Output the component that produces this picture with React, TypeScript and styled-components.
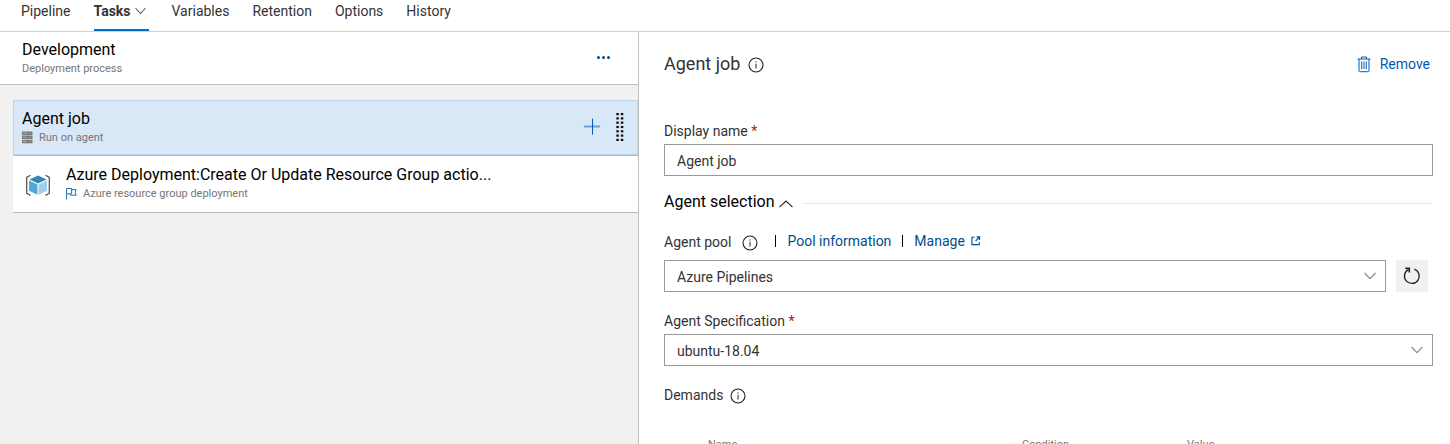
import React from "react";
import styled, { createGlobalStyle, css } from "styled-components";

const uiFont = `Roboto, "Liberation Sans", sans-serif`;

const color = {
  text: "#333333",
  strong: "#000000",
  muted: "#767676",
  link: "#004e8c",
  action: "#005bb5",
  accent: "#0070cc",
  border: "#c0c0c0",
  field: "#999999",
  surface: "#f1f1f1",
  selected: "#d9e8f7",
  selectedBorder: "#b8d5f3",
  required: "#b5121b",
};

const GlobalStyle = createGlobalStyle`
  *, *::before, *::after { box-sizing: border-box; }
  body { margin: 0; background: #fff; color: ${color.text}; font: 14px/20px ${uiFont}; }
  h1, h2, h3, p, ul { margin: 0; padding: 0; font-weight: 400; }
  button, input, select { font: inherit; color: inherit; }
  svg { display: block; flex: none; }
`;

const Page = styled.div`
  display: flex;
  flex-direction: column;
  height: 100vh;
  overflow: hidden;
`;

const TabBar = styled.nav`
  display: flex;
  flex: none;
  gap: 23px;
  padding: 0 21px;
  border-bottom: 1px solid #d0d0d0;
`;

const Tab = styled.button<{ $active?: boolean }>`
  display: flex;
  align-items: center;
  gap: 4px;
  height: 31px;
  padding: 0 0 8px;
  border: 0;
  border-bottom: 2px solid ${(p) => (p.$active ? color.accent : "transparent")};
  background: none;
  font-weight: ${(p) => (p.$active ? 700 : 400)};
  white-space: nowrap;

  svg {
    margin-right: 3px;
  }
`;

const Workspace = styled.main`
  display: grid;
  flex: 1;
  grid-template-columns: 44% 1fr;
  min-height: 0;
`;

const ProcessPane = styled.section`
  min-width: 0;
  background: ${color.surface};
`;

const ProcessHeader = styled.header`
  display: flex;
  align-items: flex-start;
  justify-content: space-between;
  height: 53px;
  padding: 8px 27px 0 22px;
  border-bottom: 1px solid ${color.border};
  background: #fff;
`;

const ItemTitle = styled.h2`
  overflow: hidden;
  color: ${color.strong};
  font-size: 16px;
  line-height: 20px;
  text-overflow: ellipsis;
  white-space: nowrap;
`;

const ItemNote = styled.p`
  display: flex;
  align-items: center;
  gap: 6px;
  color: ${color.muted};
  font-size: 11px;
  line-height: 18px;
`;

const IconButton = styled.button<{ $filled?: boolean }>`
  display: flex;
  align-items: center;
  justify-content: center;
  padding: 0;
  border: 0;
  background: none;
  cursor: pointer;
  ${(p) =>
    p.$filled &&
    css`
      flex: none;
      width: 32px;
      height: 32px;
      background: ${color.surface};
    `}
`;

const TaskList = styled.ul`
  margin: 15px 0 0 13px;
  list-style: none;
`;

const TaskItem = styled.li<{ $selected?: boolean }>`
  border-bottom: 1px solid #b8b8b8;
  background: #fff;
  ${(p) =>
    p.$selected &&
    css`
      background: ${color.selected};
      box-shadow: inset 0 0 0 1px ${color.selectedBorder};
    `}
`;

const TaskRow = styled.div<{ $nested?: boolean }>`
  display: flex;
  align-items: center;
  gap: 15px;
  height: ${(p) => (p.$nested ? 56 : 55)}px;
  padding: ${(p) => (p.$nested ? "0 16px 0 12px" : "0 14px 0 9px")};
`;

const TaskText = styled.div`
  flex: 1;
  min-width: 0;
`;

const DetailPane = styled.section`
  min-width: 0;
  padding: 0 17px 0 25px;
  border-left: 1px solid ${color.border};
  overflow: hidden;
`;

const DetailHeader = styled.header`
  display: flex;
  align-items: center;
  justify-content: space-between;
  padding: 20px 3px 45px 0;
`;

const DetailTitle = styled.div`
  display: flex;
  align-items: center;
  gap: 8px;

  h1 {
    font-size: 18px;
    line-height: 24px;
  }
`;

const RemoveButton = styled.button`
  display: flex;
  align-items: center;
  gap: 9px;
  padding: 0;
  border: 0;
  background: none;
  color: ${color.action};
  cursor: pointer;
`;

const Field = styled.div<{ $roomy?: boolean }>`
  display: flex;
  flex-direction: column;
  gap: ${(p) => (p.$roomy ? 8 : 3)}px;
`;

const LabelRow = styled.div<{ $tight?: boolean }>`
  display: flex;
  align-items: center;
  gap: ${(p) => (p.$tight ? 7 : 11)}px;
  height: 20px;
`;

const Required = styled.span`
  color: ${color.required};
`;

const controlStyle = css`
  width: 100%;
  height: 32px;
  padding: 2px 12px 0;
  border: 1px solid ${color.field};
  border-radius: 0;
  background: #fff;
`;

const TextInput = styled.input`
  ${controlStyle}
`;

const SelectBox = styled.div`
  position: relative;
  flex: 1;

  select {
    ${controlStyle}
    display: block;
    appearance: none;
  }

  svg {
    position: absolute;
    top: 12px;
    right: 10px;
    pointer-events: none;
  }
`;

const ControlRow = styled.div`
  display: flex;
  gap: 10px;
  padding-right: 5px;
`;

const SectionToggle = styled.button`
  display: flex;
  align-items: center;
  gap: 4px;
  width: 100%;
  margin: 15px 0 19px;
  padding: 0;
  border: 0;
  background: none;
  color: ${color.strong};
  font-size: 16px;
  line-height: 22px;
  text-align: left;

  svg {
    margin-top: 4px;
  }

  &::after {
    content: "";
    flex: 1;
    height: 1px;
    margin: 3px 0 0 6px;
    background: #e4e4e4;
  }
`;

const Links = styled.div`
  display: flex;
  align-items: center;
  gap: 11px;
  margin-left: 6px;
  padding-bottom: 2px;
`;

const Divider = styled.span`
  width: 1px;
  height: 12px;
  background: ${color.strong};
`;

const TextLink = styled.a`
  display: flex;
  align-items: center;
  gap: 6px;
  color: ${color.link};
  text-decoration: none;
`;

const Spacer = styled.div`
  height: 19px;
`;

const DemandTable = styled.table`
  width: 100%;
  margin-top: 30px;
  border-collapse: collapse;
  table-layout: fixed;
  color: ${color.muted};
  font-size: 11px;
  line-height: 20px;

  th {
    padding: 0;
    font-weight: 400;
    text-align: left;
  }
`;

const Chevron = ({ width = 12, up = false, stroke = "#666" }: { width?: number; up?: boolean; stroke?: string }) => (
  <svg width={width} height={8} viewBox={`0 0 ${width} 8`} fill="none" stroke={stroke} strokeWidth="1.1" aria-hidden>
    <path d={up ? `M.5 7.2 ${width / 2} 1 ${width - 0.5} 7.2` : `M.5 1 ${width / 2} 6.7 ${width - 0.5} 1`} />
  </svg>
);

const InfoIcon = () => (
  <svg width="16" height="18" viewBox="0 0 16 18" fill="none" stroke="#222" role="img" aria-label="Information">
    <circle cx="8" cy="10" r="7" strokeWidth="1.1" />
    <path d="M8 8.8V13.5M8 6.4V7.6" />
  </svg>
);

const MoreIcon = () => (
  <svg width="16" height="35" viewBox="0 0 16 35" fill="#004e8c" aria-hidden>
    <circle cx="3.5" cy="17.5" r="1.5" />
    <circle cx="8.5" cy="17.5" r="1.5" />
    <circle cx="13.5" cy="17.5" r="1.5" />
  </svg>
);

const TrashIcon = () => (
  <svg width="14" height="17" viewBox="0 0 14 17" fill="none" stroke="currentColor" aria-hidden>
    <path d="M.5 3H13.5M4.5 2.8V1H9.5V2.8M2 3V14.5Q2 15.7 3.2 15.7H10.8Q12 15.7 12 14.5V3M4.7 5.5V13M7 5.5V13M9.3 5.5V13" />
  </svg>
);

const ServerIcon = () => (
  <svg width="11" height="14" viewBox="0 0 11 14" aria-hidden>
    <path fill="#777" d="M0 .5H10.5V4H0ZM0 4.6H10.5V8.1H0ZM0 8.7H10.5V12.2H0Z" />
    <path stroke="#c3ced9" strokeWidth=".7" d="M1 2.2H5M7.2 2.2H8.8M1 6.3H5M7.2 6.3H8.8M1 10.4H5M7.2 10.4H8.8" />
  </svg>
);

const FlagIcon = () => (
  <svg width="11" height="14" viewBox="0 0 11 14" fill="none" stroke="#2a6fb0" aria-hidden>
    <path d="M.6 12.5V1.5H5.6V6.8H.6M5.6 2.6H10.2L9.2 5.4 10.2 8.2H4.4V6.8" />
  </svg>
);

const CubeIcon = () => (
  <svg width="26" height="24" viewBox="0 0 26 24" aria-hidden>
    <path fill="none" stroke="#555" strokeWidth="1.3" d="M5.4 3.2 1.7 5.4V21.2L5.4 23.4M20.6 3.2 24.3 5.4V21.2L20.6 23.4" />
    <path fill="#3487b8" d="M13 3.6 21.6 7.4 13 11.4 4.4 7.4Z" />
    <path fill="#4fa9d3" d="M4 8.4 12.5 12.4V22.8L4 18.8Z" />
    <path fill="#9fd0e9" d="M22 8.4 13.5 12.4V22.8L22 18.8Z" />
  </svg>
);

const PlusIcon = () => (
  <svg width="18" height="20" viewBox="0 0 18 20" aria-hidden>
    <path stroke="#6fa0d6" strokeWidth="2" d="M.8 8.5H17.2" />
    <path stroke="#005bb5" d="M9.5 .5V16.5" />
  </svg>
);

const GripIcon = () => (
  <svg width="8" height="31" viewBox="0 0 8 31" fill="#111" aria-hidden>
    {[0, 1, 2, 3, 4, 5, 6].map((row) => (
      <React.Fragment key={row}>
        <rect x="0.3" y={1 + row * 4.3} width="2.5" height="2.2" />
        <rect x="4.8" y={1 + row * 4.3} width="2.5" height="2.2" />
      </React.Fragment>
    ))}
  </svg>
);

const ExternalIcon = () => (
  <svg width="10" height="10" viewBox="0 0 10 10" fill="none" stroke="currentColor" strokeWidth="1.1" aria-hidden>
    <path d="M3.6 1.2H.9V8.6H8.3V6.2M5.5.9H8.6V4M8.6.9 4.6 5" />
  </svg>
);

const RefreshIcon = () => (
  <svg width="18" height="18" viewBox="0 0 18 18" fill="none" stroke="#222" strokeWidth="1.3" aria-hidden>
    <path d="M11.4 2.1A7.4 7.4 0 1 1 5.6 2.4" />
    <path d="M2.2 1.3H6.3V5.6" strokeWidth="1.6" />
  </svg>
);

export default function App() {
  return (
    <Page>
      <GlobalStyle />
      <TabBar aria-label="Pipeline sections">
        <Tab>Pipeline</Tab>
        <Tab $active aria-current="page">
          Tasks
          <Chevron width={11} />
        </Tab>
        <Tab>Variables</Tab>
        <Tab>Retention</Tab>
        <Tab>Options</Tab>
        <Tab>History</Tab>
      </TabBar>
      <Workspace>
        <ProcessPane>
          <ProcessHeader>
            <div>
              <ItemTitle>Development</ItemTitle>
              <ItemNote>Deployment process</ItemNote>
            </div>
            <IconButton aria-label="More actions">
              <MoreIcon />
            </IconButton>
          </ProcessHeader>
          <TaskList>
            <TaskItem $selected>
              <TaskRow>
                <TaskText>
                  <ItemTitle>Agent job</ItemTitle>
                  <ItemNote>
                    <ServerIcon />
                    Run on agent
                  </ItemNote>
                </TaskText>
                <IconButton aria-label="Add a task">
                  <PlusIcon />
                </IconButton>
                <GripIcon />
              </TaskRow>
            </TaskItem>
            <TaskItem>
              <TaskRow $nested>
                <CubeIcon />
                <TaskText>
                  <ItemTitle>Azure Deployment:Create Or Update Resource Group actio...</ItemTitle>
                  <ItemNote>
                    <FlagIcon />
                    Azure resource group deployment
                  </ItemNote>
                </TaskText>
              </TaskRow>
            </TaskItem>
          </TaskList>
        </ProcessPane>
        <DetailPane>
          <DetailHeader>
            <DetailTitle>
              <h1>Agent job</h1>
              <InfoIcon />
            </DetailTitle>
            <RemoveButton>
              <TrashIcon />
              Remove
            </RemoveButton>
          </DetailHeader>
          <Field>
            <LabelRow>
              <label htmlFor="display-name">
                Display name <Required>*</Required>
              </label>
            </LabelRow>
            <TextInput id="display-name" defaultValue="Agent job" />
          </Field>
          <SectionToggle aria-expanded>
            Agent selection
            <Chevron width={14} up stroke="#222" />
          </SectionToggle>
          <Field $roomy>
            <LabelRow>
              <label htmlFor="agent-pool">Agent pool</label>
              <InfoIcon />
              <Links>
                <Divider />
                <TextLink href="#pool">Pool information</TextLink>
                <Divider />
                <TextLink href="#manage">
                  Manage
                  <ExternalIcon />
                </TextLink>
              </Links>
            </LabelRow>
            <ControlRow>
              <SelectBox>
                <select id="agent-pool">
                  <option>Azure Pipelines</option>
                </select>
                <Chevron stroke="#888" />
              </SelectBox>
              <IconButton $filled aria-label="Refresh">
                <RefreshIcon />
              </IconButton>
            </ControlRow>
          </Field>
          <Spacer />
          <Field>
            <LabelRow>
              <label htmlFor="agent-spec">
                Agent Specification <Required>*</Required>
              </label>
            </LabelRow>
            <SelectBox>
              <select id="agent-spec">
                <option>ubuntu-18.04</option>
              </select>
              <Chevron stroke="#888" />
            </SelectBox>
          </Field>
          <Spacer />
          <LabelRow $tight>
            <span>Demands</span>
            <InfoIcon />
          </LabelRow>
          <DemandTable>
            <colgroup>
              <col style={{ width: "44px" }} />
              <col />
              <col style={{ width: "165px" }} />
              <col style={{ width: "246px" }} />
            </colgroup>
            <thead>
              <tr>
                <th aria-label="Actions" />
                <th scope="col">Name</th>
                <th scope="col">Condition</th>
                <th scope="col">Value</th>
              </tr>
            </thead>
          </DemandTable>
        </DetailPane>
      </Workspace>
    </Page>
  );
}
